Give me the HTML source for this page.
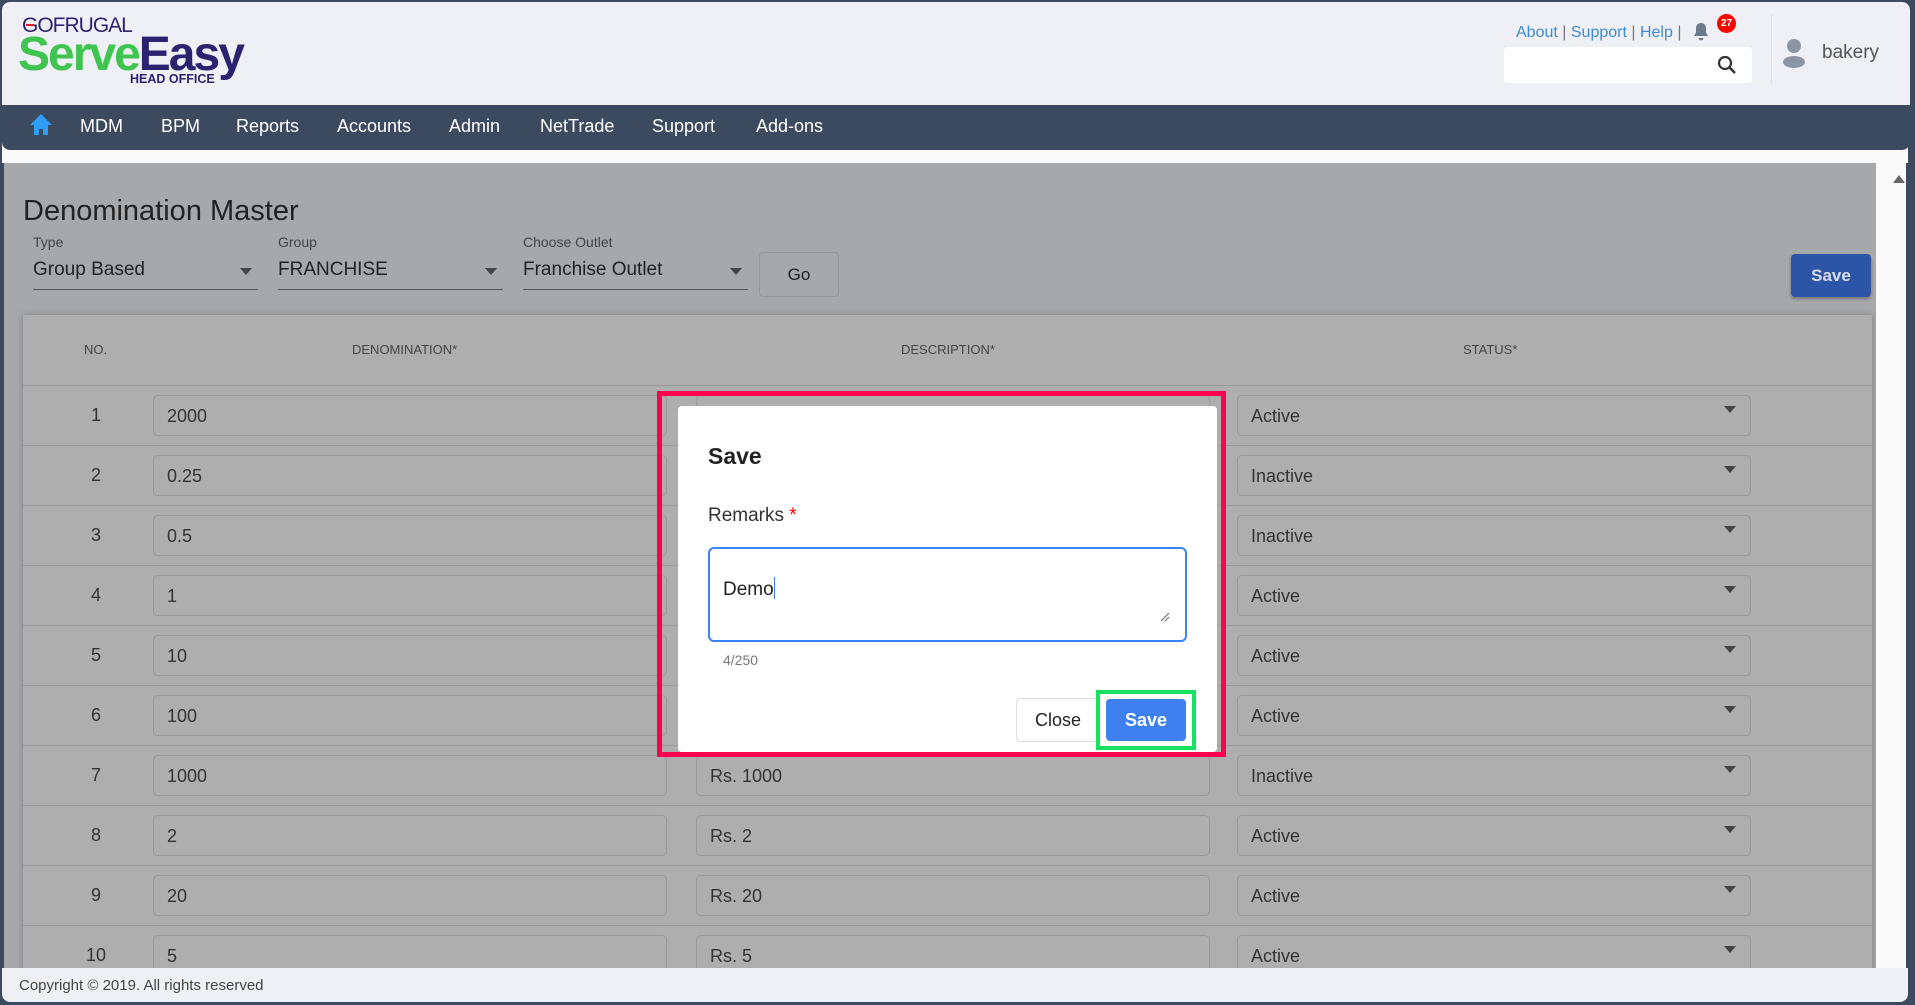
<!DOCTYPE html>
<html><head><meta charset="utf-8"><style>
*{box-sizing:border-box;margin:0;padding:0}
body{width:1915px;height:1005px;overflow:hidden;background:#3b4a5e;font-family:"Liberation Sans",sans-serif;position:relative}
.abs{position:absolute}
#hdr{left:2px;top:2px;width:1908px;height:103px;background:#eff0f5;border-radius:8px 8px 0 0}
#nav{left:2px;top:105px;width:1908px;height:45px;background:#3b4a5f;border-radius:0 0 8px 8px}
.nv{position:absolute;top:116px;color:#fff;font-size:18px}
#content{left:4px;top:163px;width:1872px;height:805px;background:#a7a8aa;overflow:hidden}
#sb{left:1876px;top:163px;width:30px;height:805px;background:#fafafa}
#foot{left:2px;top:968px;width:1906px;height:34px;background:#eff0f5;border-radius:0 0 8px 8px}
.lbl{position:absolute;font-size:14px;color:#444}
.sel{position:absolute;top:256px;height:34px;border-bottom:1px solid #555;font-size:19px;color:#222;padding-top:3px}
.sel:after{content:"";position:absolute;right:6px;top:12px;border:6px solid transparent;border-top:7px solid #444}
#card{left:19px;top:152px;width:1849px;height:700px;background:#aeaeae;box-shadow:0 0 6px rgba(0,0,0,.25)}
.th{position:absolute;top:27px;font-size:13px;color:#444}
.row{position:absolute;left:0;width:1849px;height:60px;border-top:1px solid #9a9a9a}
.no{position:absolute;left:46px;width:54px;text-align:center;top:19px;font-size:18px;color:#333}
.in{position:absolute;top:9px;height:41px;border:1px solid #999;border-radius:5px;font-size:18px;color:#333;padding:10px 13px}
.st:after{content:"";position:absolute;right:14px;top:10px;border:6px solid transparent;border-top:7px solid #444}
</style></head><body>
<div id="hdr" class="abs"></div>
<div class="abs" style="left:2px;top:140px;width:1906px;height:23px;background:#fafafa"></div>
<div class="abs" style="left:22px;top:14px;font-size:21px;color:#2b2370;letter-spacing:-1px">GOFRUGAL</div>
<div class="abs" style="left:26px;top:24px;width:8px;height:2px;background:#e02020"></div>
<div class="abs" style="left:18px;top:30px;font-size:48px;font-weight:bold;letter-spacing:-2px;line-height:50px"><span style="color:#3fc44f">Serve</span><span style="color:#2b2370">Easy</span></div>
<div class="abs" style="left:130px;top:72px;font-size:12.5px;font-weight:bold;color:#2b2370">HEAD OFFICE</div>

<div class="abs" style="left:1516px;top:24px;font-size:16px;color:#3f8ad0">About <span style="color:#777">|</span> Support <span style="color:#777">|</span> Help <span style="color:#777">|</span></div>
<svg class="abs" style="left:1692px;top:22px" width="18" height="20" viewBox="0 0 18 20"><path d="M9 1c-3 0-5 2.3-5 5.5v4L2 14h14l-2-3.5v-4C14 3.3 12 1 9 1zM6.5 16a2.5 2.5 0 005 0z" fill="#6b7a8c"/></svg>
<div class="abs" style="left:1717px;top:14px;width:19px;height:19px;border-radius:50%;background:#f00;color:#fff;font-size:10px;font-weight:bold;text-align:center;line-height:19px">27</div>
<div class="abs" style="left:1504px;top:47px;width:248px;height:36px;background:#fff;border-radius:4px"></div>
<svg class="abs" style="left:1717px;top:55px" width="20" height="20" viewBox="0 0 20 20"><circle cx="8" cy="8" r="6" fill="none" stroke="#333" stroke-width="2.2"/><path d="M12.5 12.5L18 18" stroke="#333" stroke-width="2.5"/></svg>
<div class="abs" style="left:1771px;top:14px;width:1px;height:70px;background:#dde0e6"></div>
<svg class="abs" style="left:1782px;top:38px" width="24" height="30" viewBox="0 0 24 30"><circle cx="12" cy="8" r="7" fill="#8a96a4"/><ellipse cx="12" cy="24" rx="11" ry="6" fill="#8a96a4"/></svg>
<div class="abs" style="left:1822px;top:42px;font-size:19px;color:#555">bakery</div>

<div id="nav" class="abs"></div>
<svg class="abs" style="left:29px;top:113px" width="24" height="24" viewBox="0 0 24 24"><path d="M12 1L1 12h4v10h5v-6h4v6h5V12h4z" fill="#2f9cf5"/></svg>
<div class="nv" style="left:80px">MDM</div><div class="nv" style="left:161px">BPM</div><div class="nv" style="left:236px">Reports</div><div class="nv" style="left:337px">Accounts</div><div class="nv" style="left:449px">Admin</div><div class="nv" style="left:540px">NetTrade</div><div class="nv" style="left:652px">Support</div><div class="nv" style="left:756px">Add-ons</div>

<div id="content" class="abs">
<div class="abs" style="left:19px;top:32px;font-size:29px;color:#222">Denomination Master</div>
<div class="lbl" style="left:29px;top:71px">Type</div>
<div class="lbl" style="left:274px;top:71px">Group</div>
<div class="lbl" style="left:519px;top:71px">Choose Outlet</div>
<div class="sel" style="left:29px;width:225px;top:93px">Group Based</div>
<div class="sel" style="left:274px;width:225px;top:93px">FRANCHISE</div>
<div class="sel" style="left:519px;width:225px;top:93px">Franchise Outlet</div>
<div class="abs" style="left:755px;top:89px;width:80px;height:45px;border:1px solid #999;border-radius:4px;font-size:17px;color:#222;text-align:center;line-height:44px">Go</div>
<div class="abs" style="left:1787px;top:91px;width:80px;height:43px;background:#2c55a8;border-radius:4px;color:#d8dde8;font-size:17px;font-weight:bold;text-align:center;line-height:43px;box-shadow:0 2px 3px rgba(0,0,0,.3)">Save</div>
<div id="card" class="abs">
<div class="th" style="left:61px">NO.</div>
<div class="th" style="left:329px">DENOMINATION*</div>
<div class="th" style="left:878px">DESCRIPTION*</div>
<div class="th" style="left:1440px">STATUS*</div>
<div class="row" style="top:70px"><div class="no">1</div><div class="in" style="left:130px;width:514px">2000</div><div class="in" style="left:673px;width:514px">Rs. 2000</div><div class="in st" style="left:1214px;width:514px">Active</div></div>
<div class="row" style="top:130px"><div class="no">2</div><div class="in" style="left:130px;width:514px">0.25</div><div class="in" style="left:673px;width:514px"></div><div class="in st" style="left:1214px;width:514px">Inactive</div></div>
<div class="row" style="top:190px"><div class="no">3</div><div class="in" style="left:130px;width:514px">0.5</div><div class="in" style="left:673px;width:514px"></div><div class="in st" style="left:1214px;width:514px">Inactive</div></div>
<div class="row" style="top:250px"><div class="no">4</div><div class="in" style="left:130px;width:514px">1</div><div class="in" style="left:673px;width:514px"></div><div class="in st" style="left:1214px;width:514px">Active</div></div>
<div class="row" style="top:310px"><div class="no">5</div><div class="in" style="left:130px;width:514px">10</div><div class="in" style="left:673px;width:514px"></div><div class="in st" style="left:1214px;width:514px">Active</div></div>
<div class="row" style="top:370px"><div class="no">6</div><div class="in" style="left:130px;width:514px">100</div><div class="in" style="left:673px;width:514px"></div><div class="in st" style="left:1214px;width:514px">Active</div></div>
<div class="row" style="top:430px"><div class="no">7</div><div class="in" style="left:130px;width:514px">1000</div><div class="in" style="left:673px;width:514px">Rs. 1000</div><div class="in st" style="left:1214px;width:514px">Inactive</div></div>
<div class="row" style="top:490px"><div class="no">8</div><div class="in" style="left:130px;width:514px">2</div><div class="in" style="left:673px;width:514px">Rs. 2</div><div class="in st" style="left:1214px;width:514px">Active</div></div>
<div class="row" style="top:550px"><div class="no">9</div><div class="in" style="left:130px;width:514px">20</div><div class="in" style="left:673px;width:514px">Rs. 20</div><div class="in st" style="left:1214px;width:514px">Active</div></div>
<div class="row" style="top:610px"><div class="no">10</div><div class="in" style="left:130px;width:514px">5</div><div class="in" style="left:673px;width:514px">Rs. 5</div><div class="in st" style="left:1214px;width:514px">Active</div></div>
</div>
</div>
<div id="sb" class="abs"></div>
<div class="abs" style="left:1893px;top:175px;border:6px solid transparent;border-bottom:8px solid #666;border-top:0"></div>
<div id="foot" class="abs"></div>
<div class="abs" style="left:19px;top:977px;font-size:15px;color:#444">Copyright © 2019. All rights reserved</div>

<div class="abs" style="left:657px;top:391px;width:569px;height:366px;border:5px solid #ff0050"></div>
<div class="abs" style="left:678px;top:406px;width:539px;height:346px;background:#fff;border-radius:4px"></div>
<div class="abs" style="left:708px;top:443px;font-size:23px;font-weight:bold;color:#222">Save</div>
<div class="abs" style="left:708px;top:505px;font-size:19px;color:#333">Remarks <span style="color:#e00">*</span></div>
<div class="abs" style="left:708px;top:547px;width:479px;height:95px;border:2px solid #3b82f6;border-radius:6px"></div>
<div class="abs" style="left:723px;top:577px;font-size:19px;color:#222">Demo<span style="display:inline-block;width:1px;height:22px;background:#3b82f6;vertical-align:-4px"></span></div>
<svg class="abs" style="left:1160px;top:612px" width="10" height="10"><path d="M1 9L9 1M5 9L9 5" stroke="#666"/></svg>
<div class="abs" style="left:723px;top:652px;font-size:14px;color:#777">4/250</div>
<div class="abs" style="left:1016px;top:698px;width:84px;height:44px;border:1px solid #ddd;border-radius:4px;font-size:18px;color:#222;text-align:center;line-height:42px">Close</div>
<div class="abs" style="left:1096px;top:690px;width:100px;height:60px;border:4px solid #19e060"></div>
<div class="abs" style="left:1106px;top:699px;width:80px;height:42px;background:#3f80f0;border-radius:4px;color:#fff;font-size:18px;font-weight:bold;text-align:center;line-height:42px">Save</div>
</body></html>
